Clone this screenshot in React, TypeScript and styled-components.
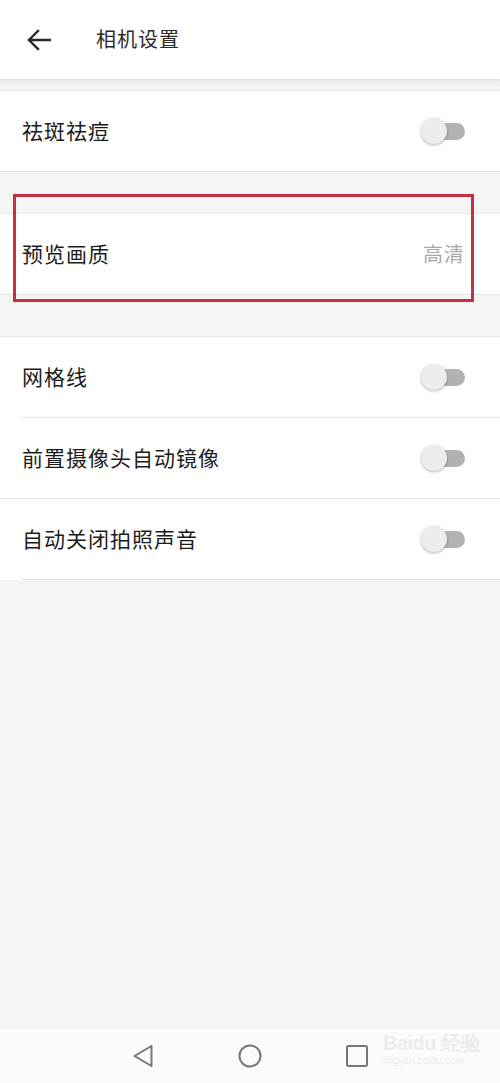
import React from "react";
import styled, { createGlobalStyle } from "styled-components";

const Global = createGlobalStyle`
  html, body { margin: 0; padding: 0; background: #f5f5f5; }
  body { font-family: "Noto Sans CJK SC", "Noto Sans", sans-serif; }
  * { box-sizing: border-box; }
`;

const Page = styled.div`
  position: relative;
  width: 500px;
  height: 1083px;
  background: #f5f5f5;
  display: flex;
  flex-direction: column;
  overflow: hidden;
`;

const Header = styled.header`
  height: 79px;
  background: #ffffff;
  display: flex;
  align-items: center;
  padding-left: 26px;
  gap: 45px;
  box-shadow: 0 1px 3px rgba(0, 0, 0, 0.08);
  position: relative;
  z-index: 1;
`;

const BackBtn = styled.div`
  width: 25px;
  height: 25px;
  display: flex;
  align-items: center;
  justify-content: center;
`;

const Title = styled.h1`
  margin: 0 0 2px;
  font-size: 20px;
  font-weight: 400;
  color: #2b2b2b;
  letter-spacing: 1px;
`;

const Content = styled.div`
  flex: 1;
  display: flex;
  flex-direction: column;
  padding-top: 11px;
  gap: 41px;
  background: linear-gradient(#ececec 0, #f5f5f5 8px, #f5f5f5 100%);
`;

const Section = styled.section`
  background: #ffffff;
  border-top: 1px solid #e8e8e8;
  display: flex;
  flex-direction: column;
`;

const Row = styled.div<{ $divider?: "inset" | "full" | "none" }>`
  position: relative;
  height: 81px;
  display: flex;
  align-items: center;
  justify-content: space-between;
  padding: 0 35px 0 22px;
  &::after {
    content: "";
    position: absolute;
    bottom: 0;
    right: 0;
    left: ${(p) => (p.$divider === "inset" ? "22px" : "0")};
    height: 1px;
    background: #e6e6e6;
    display: ${(p) => (p.$divider === "none" ? "none" : "block")};
  }
`;

const Label = styled.span`
  font-size: 21px;
  color: #1c1c1c;
  letter-spacing: 1px;
  margin-bottom: 3px;
`;

const Value = styled.span`
  font-size: 20px;
  color: #a8a8a8;
  letter-spacing: 1px;
  margin-bottom: 3px;
`;

const Toggle = styled.div`
  position: relative;
  width: 44px;
  height: 26px;
  display: flex;
  align-items: center;
  margin-bottom: 1px;
`;

const Track = styled.div`
  margin-left: 6px;
  width: 38px;
  height: 17px;
  border-radius: 9px;
  background: #b2b2b2;
`;

const Thumb = styled.div`
  position: absolute;
  left: 0;
  top: 0;
  width: 26px;
  height: 26px;
  border-radius: 50%;
  background: #ececec;
  box-shadow: 0 1px 3px rgba(0, 0, 0, 0.3);
`;

const Highlight = styled.div`
  position: absolute;
  left: 13px;
  top: 194px;
  width: 461px;
  height: 108px;
  border: 3px solid #c9303e;
  pointer-events: none;
`;

const NavBar = styled.nav`
  height: 54px;
  background: #fbfbfb;
  display: flex;
  align-items: center;
  justify-content: center;
  gap: 83px;
  padding-left: 0;
`;

const NavIcon = styled.div`
  width: 24px;
  height: 24px;
  display: flex;
  align-items: center;
  justify-content: center;
`;

const Watermark = styled.div`
  position: absolute;
  left: 383px;
  top: 1030px;
  display: flex;
  flex-direction: column;
  color: rgba(215, 215, 215, 0.45);
  font-family: "Liberation Sans", sans-serif;
  pointer-events: none;
`;

const WmTop = styled.span`
  font-size: 20px;
  font-weight: 700;
  letter-spacing: -0.5px;
`;

const WmBottom = styled.span`
  font-size: 10px;
  margin-top: -2px;
`;

function Switch() {
  return (
    <Toggle>
      <Track />
      <Thumb />
    </Toggle>
  );
}

export default function App() {
  return (
    <Page>
      <Global />
      <Header>
        <BackBtn>
          <svg width="25" height="22" viewBox="0 0 25 22" fill="none">
            <path d="M24 11H3M12 2L3 11l9 9" stroke="#2a2a2a" strokeWidth="2.4" strokeLinecap="square" />
          </svg>
        </BackBtn>
        <Title>相机设置</Title>
      </Header>
      <Content>
        <Section>
          <Row $divider="full">
            <Label>祛斑祛痘</Label>
            <Switch />
          </Row>
        </Section>
        <Section>
          <Row $divider="full">
            <Label>预览画质</Label>
            <Value>高清</Value>
          </Row>
        </Section>
        <Section>
          <Row $divider="inset">
            <Label>网格线</Label>
            <Switch />
          </Row>
          <Row $divider="full">
            <Label>前置摄像头自动镜像</Label>
            <Switch />
          </Row>
          <Row $divider="inset">
            <Label>自动关闭拍照声音</Label>
            <Switch />
          </Row>
        </Section>
      </Content>
      <NavBar>
        <NavIcon>
          <svg width="22" height="24" viewBox="0 0 22 24" fill="none">
            <path d="M19.5 2L2.5 12l17 10z" stroke="#777" strokeWidth="2" strokeLinejoin="round" />
          </svg>
        </NavIcon>
        <NavIcon>
          <svg width="24" height="24" viewBox="0 0 24 24" fill="none">
            <circle cx="12" cy="12" r="10.5" stroke="#777" strokeWidth="2" />
          </svg>
        </NavIcon>
        <NavIcon>
          <svg width="22" height="22" viewBox="0 0 22 22" fill="none">
            <rect x="1" y="1" width="20" height="20" rx="1.5" stroke="#777" strokeWidth="2" />
          </svg>
        </NavIcon>
      </NavBar>
      <Highlight />
      <Watermark>
        <WmTop>Baidu 经验</WmTop>
        <WmBottom>jingyan.baidu.com</WmBottom>
      </Watermark>
    </Page>
  );
}
